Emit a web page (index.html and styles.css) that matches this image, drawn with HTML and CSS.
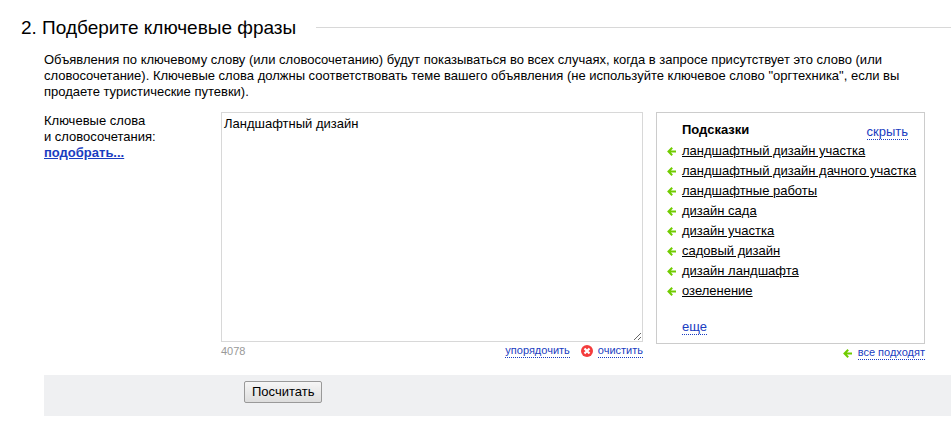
FILE: index.html
```html
<!DOCTYPE html>
<html lang="ru">

<head>
    <meta charset="UTF-8">
    <meta name="viewport" content="width=device-width, initial-scale=1.0">
    <title>Подберите ключевые фразы</title>
    <link rel="stylesheet" href="styles.css">
</head>

<body>
    <svg class="sprite" aria-hidden="true">
        <symbol id="arrow" viewBox="0 0 9 9">
            <path d="M5.2 0.8L1.5 4.5L5.2 8.2M1.5 4.5H9" fill="none" stroke="#70cc00" stroke-width="2" />
        </symbol>
        <symbol id="cross" viewBox="0 0 12 12">
            <circle cx="6" cy="6" r="6" fill="#f43c3c" />
            <path d="M3.5 3.5L8.5 8.5M8.5 3.5L3.5 8.5" stroke="#fff" stroke-width="2.2" />
        </symbol>
    </svg>
    <form class="step" action="#">
        <h2 class="title">2. Подберите ключевые фразы</h2>
        <div class="content">
            <p class="intro">Объявления по ключевому слову (или словосочетанию) будут показываться во всех случаях, когда в запросе присутствует это слово (или словосочетание). Ключевые слова должны соответствовать теме вашего объявления (не используйте ключевое слово "оргтехника", если вы продаете туристические путевки).</p>
            <div class="fields">
                <div class="name">
                    <label for="phrases">Ключевые слова<br>и словосочетания:</label>
                    <a class="pick" href="#">подобрать...</a>
                </div>
                <div class="phrases">
                    <textarea class="text" id="phrases">Ландшафтный дизайн</textarea>
                    <div class="tools">
                        <span class="count">4078</span>
                        <a class="pseudo" href="#">упорядочить</a>
                        <svg class="cross"><use href="#cross" /></svg>
                        <a class="pseudo" href="#">очистить</a>
                    </div>
                </div>
                <div class="side">
                    <div class="hints">
                        <div class="head">
                            <h3>Подсказки</h3>
                            <a class="pseudo" href="#">скрыть</a>
                        </div>
                        <ul class="list">
                            <li><svg class="arrow"><use href="#arrow" /></svg><a href="#">ландшафтный дизайн участка</a></li>
                            <li><svg class="arrow"><use href="#arrow" /></svg><a href="#">ландшафтный дизайн дачного участка</a></li>
                            <li><svg class="arrow"><use href="#arrow" /></svg><a href="#">ландшафтные работы</a></li>
                            <li><svg class="arrow"><use href="#arrow" /></svg><a href="#">дизайн сада</a></li>
                            <li><svg class="arrow"><use href="#arrow" /></svg><a href="#">дизайн участка</a></li>
                            <li><svg class="arrow"><use href="#arrow" /></svg><a href="#">садовый дизайн</a></li>
                            <li><svg class="arrow"><use href="#arrow" /></svg><a href="#">дизайн ландшафта</a></li>
                            <li><svg class="arrow"><use href="#arrow" /></svg><a href="#">озеленение</a></li>
                        </ul>
                        <a class="pseudo more" href="#">еще</a>
                    </div>
                    <div class="tools">
                        <svg class="arrow"><use href="#arrow" /></svg>
                        <a class="pseudo" href="#">все подходят</a>
                    </div>
                </div>
            </div>
        </div>
        <div class="submit">
            <button class="button" type="button">Посчитать</button>
        </div>
    </form>
</body>

</html>
```

FILE: styles.css
```css
* {
    margin: 0;
    padding: 0;
    box-sizing: border-box;
}

body {
    font: 13px/16px "Liberation Sans", Arial, sans-serif;
    color: #000;
    background-color: #fff;
}

ul {
    list-style: none;
}

svg {
    flex: none;
}

.sprite {
    display: none;
}

.step {
    padding-top: 16px;
}

.title {
    display: flex;
    align-items: center;
    gap: 20px;
    padding-left: 21px;
    font-size: 19px;
    line-height: 24px;
    font-weight: normal;
}

/* линия до правого края */
.title::after {
    content: "";
    flex: 1;
    height: 1px;
    margin-bottom: 2px;
    background-color: #d8d8d8;
}

.content {
    padding: 12px 26px 0 44px;
}

.fields {
    display: grid;
    grid-template-columns: 177px minmax(0, 1fr) 269px;
    margin-top: 12px;
}

.name {
    padding-top: 1px;
}

.pick {
    display: table;
    font-weight: bold;
    color: #1a3dc1;
}

.phrases {
    margin-right: 13px;
}

.text {
    display: block;
    width: 100%;
    height: 230px;
    padding: 3px 2px;
    border: 1px solid #d8d8d8;
    font: inherit;
    outline: none;
    resize: both;
}

.tools {
    display: flex;
    align-items: center;
    justify-content: flex-end;
    padding-top: 2px;
    font-size: 11px;
    line-height: 13px;
}

.count {
    margin-right: auto;
    color: #999;
}

.pseudo {
    color: #1a3dc1;
    text-decoration: none;
    border-bottom: 1px dotted #1a3dc1;
}

.cross {
    width: 12px;
    height: 12px;
    margin: 0 5px 0 11px;
}

.arrow {
    width: 9px;
    height: 9px;
    margin-right: 6px;
}

.hints {
    padding: 7px 10px 8px;
    border: 1px solid #ccc;
}

.head {
    display: flex;
    justify-content: space-between;
    align-items: flex-end;
    padding: 0 6px 1px 15px;
}

.head h3 {
    font-size: 13px;
    line-height: 20px;
}

.head .pseudo,
.more {
    line-height: 14px;
}

.list li {
    display: flex;
    align-items: center;
    height: 20px;
    white-space: nowrap;
}

.list a {
    color: #000;
}

.more {
    display: table;
    margin: 19px 0 0 15px;
}

.submit {
    margin: 15px 0 0 44px;
    padding: 6px 0 13px 200px;
    background-color: #eff0f2;
}

.button {
    display: block;
    height: 22px;
    padding: 0 7px;
    border: 1px solid #999;
    border-radius: 2px;
    font: inherit;
    color: #000;
    background: linear-gradient(#f6f6f6, #ddd);
}
```
